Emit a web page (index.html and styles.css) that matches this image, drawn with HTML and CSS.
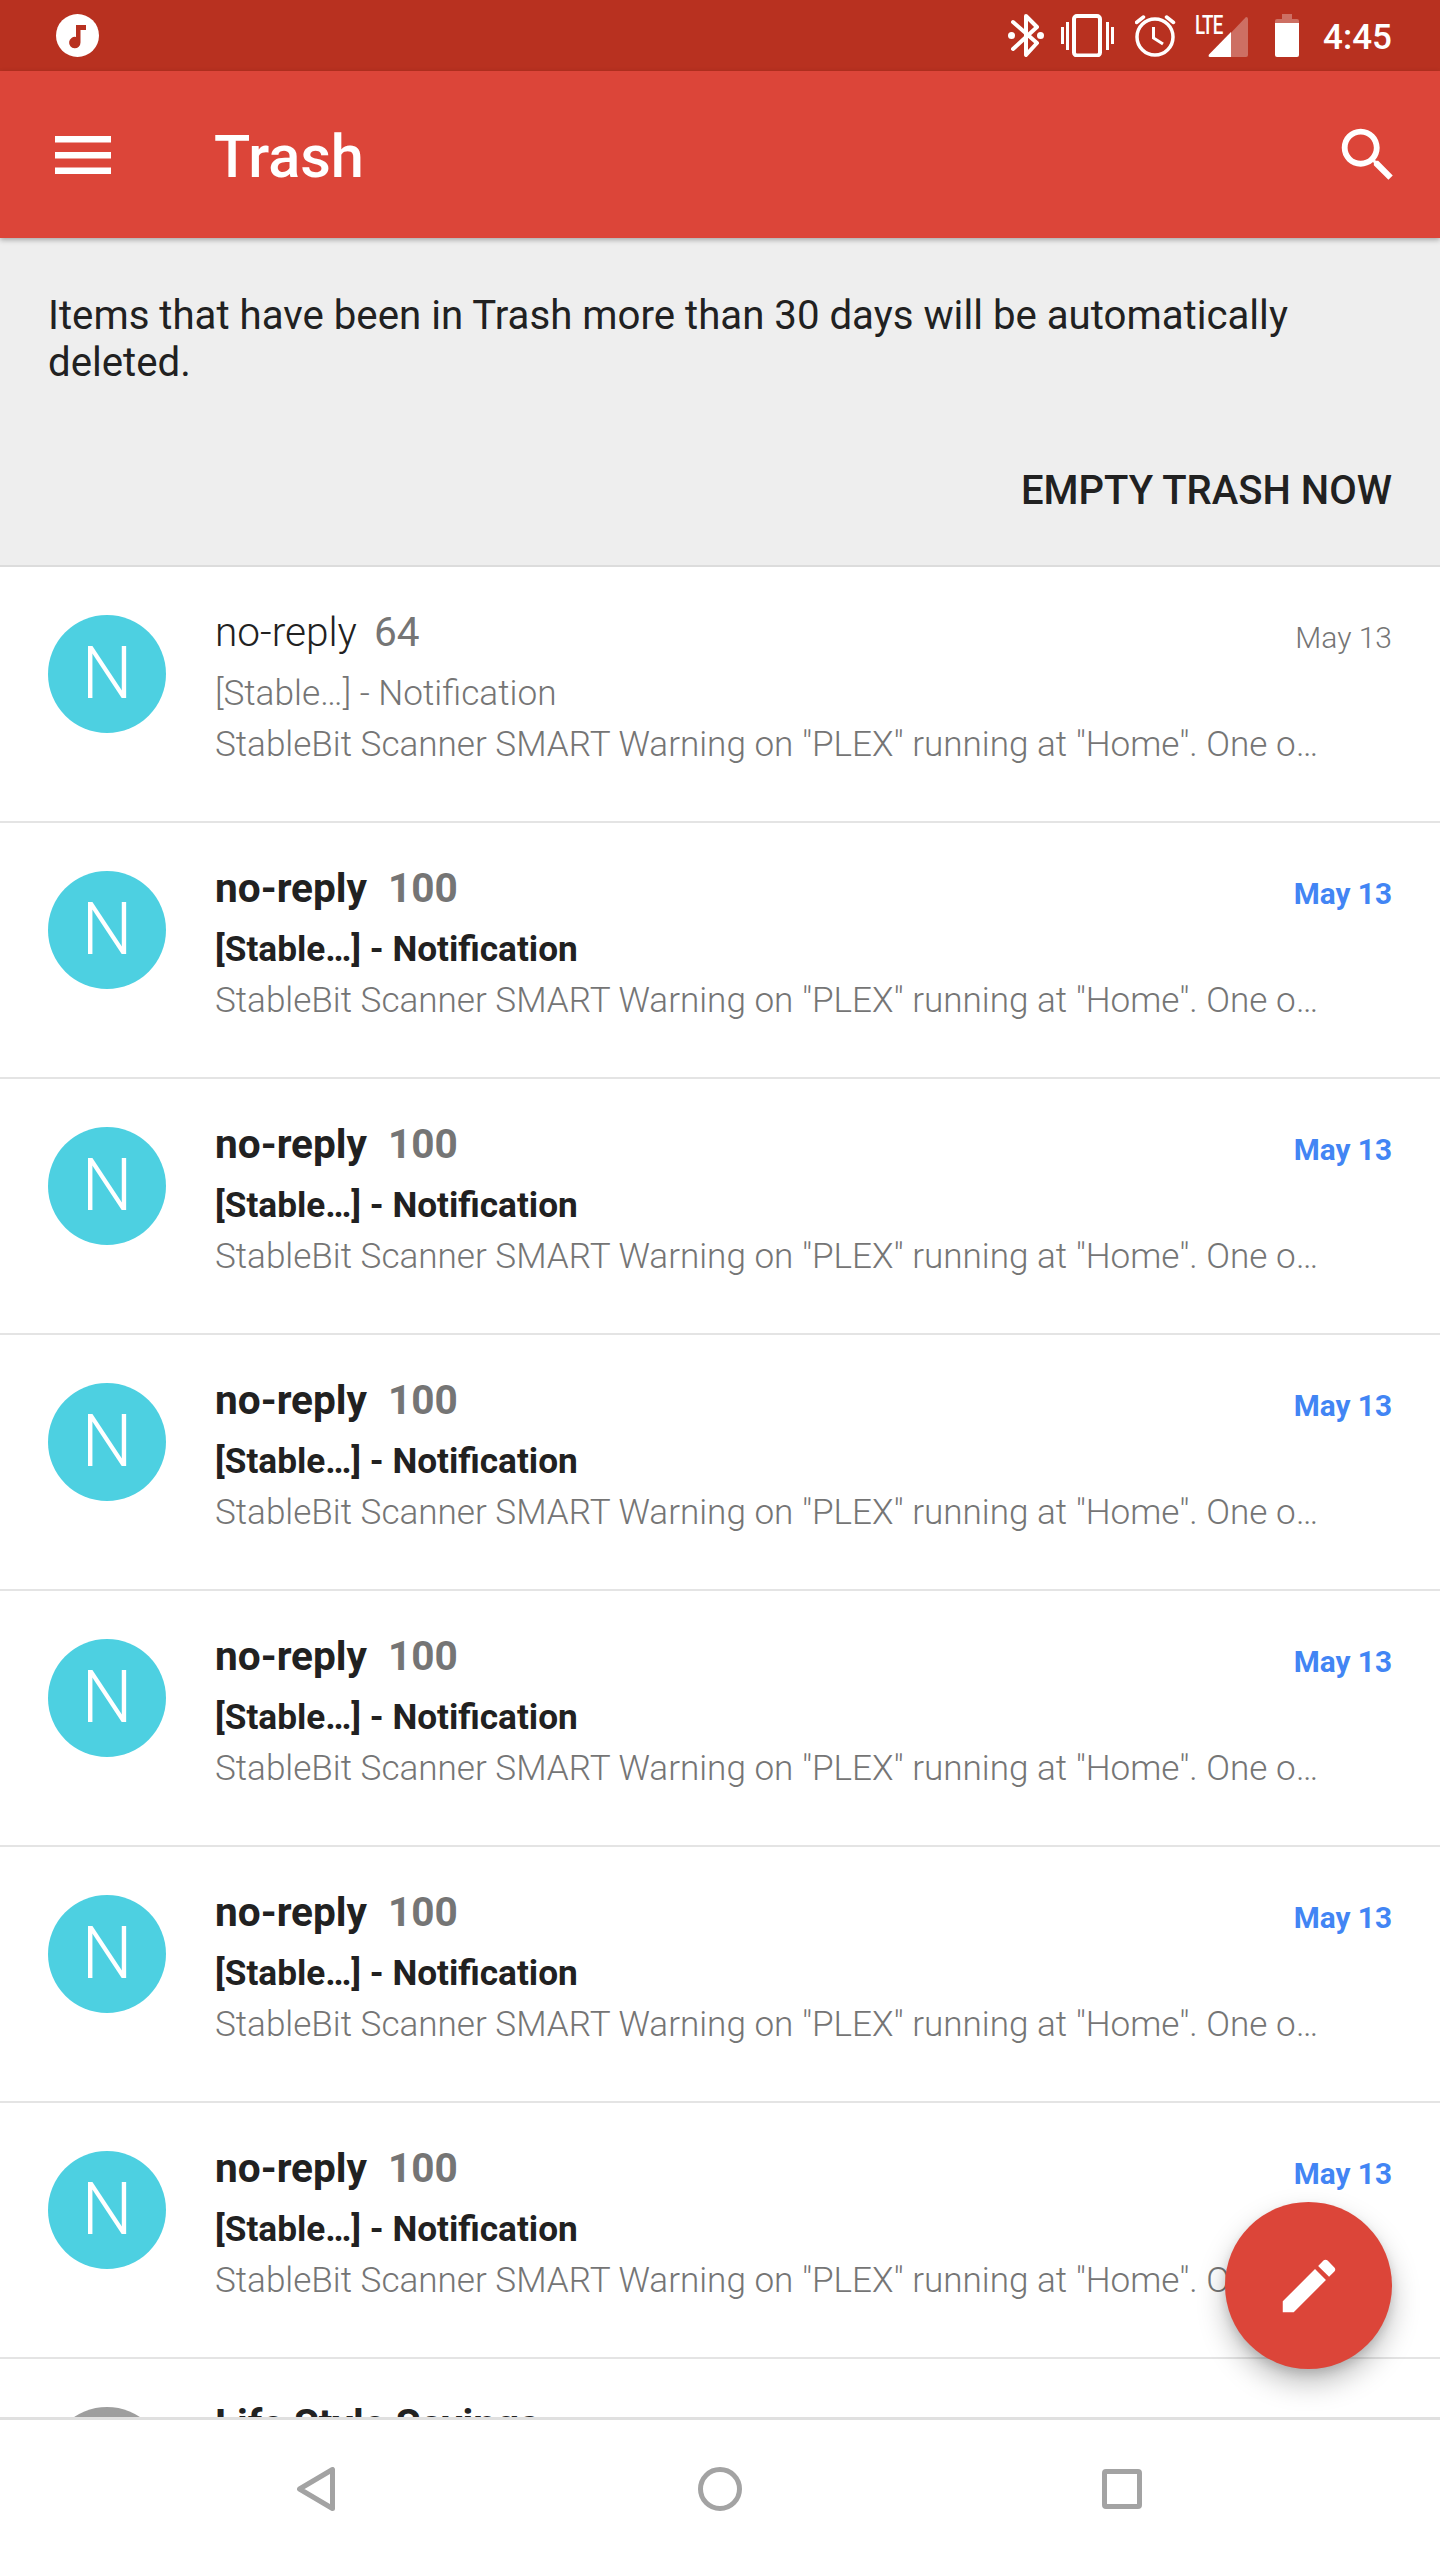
FILE: index.html
```html
<!DOCTYPE html>
<html lang="en">
<head>
<meta charset="utf-8">
<title>Trash</title>
<link rel="stylesheet" href="styles.css">
</head>
<body>
<div class="screen">
  <div class="status">
    <svg class="music" viewBox="0 0 43 43"><circle cx="21.500" cy="21.500" r="21.500" fill="#fff"/><path d="M20 11h10v5h-5.500v12.500a5.700 5.700 0 1 1-4.500-5.500z" fill="#b83120"/></svg>
    <div class="status-right">
      <svg class="si-bt" viewBox="0 0 36 43"><path d="M5 8 L29 29 L18 41 V2 L29 13 L5 35" fill="none" stroke="#fff" stroke-width="4" stroke-linejoin="round" stroke-linecap="round"/><circle cx="3.500" cy="21.500" r="3.500" fill="#fff"/><circle cx="32.500" cy="21.500" r="3.500" fill="#fff"/></svg>
      <svg class="si-vib" viewBox="0 0 53 43"><rect x="13" y="2" width="26" height="39.500" rx="3" fill="none" stroke="#fff" stroke-width="4"/><path d="M1.500 13v17M6.500 8v28M46.500 8v28M51.500 13v17" stroke="#fff" stroke-width="3" fill="none"/></svg>
      <svg class="si-alarm" viewBox="0 0 41 43"><circle cx="20" cy="23" r="18" fill="none" stroke="#fff" stroke-width="3.500"/><path d="M18.500 13v11l9.500 6" fill="none" stroke="#fff" stroke-width="3"/><path d="M1.500 8.500 8.500 3M38.500 8.500 31.500 3" stroke="#fff" stroke-width="3.500" stroke-linecap="round"/></svg>
      <div class="signal">
        <span class="lte">LTE</span>
        <svg class="si-sig" viewBox="0 0 40 40"><path d="M38 0a2 2 0 0 1 2 2v36a2 2 0 0 1-2 2H0z" fill="#fff" opacity=".3"/><path d="M23 15V40H2a1.500 1.500 0 0 1-1-2.500z" fill="#fff"/></svg>
      </div>
      <svg class="si-bat" viewBox="0 0 24 43"><path d="M7 0h10v5h5a2 2 0 0 1 2 2v3H0V7a2 2 0 0 1 2-2h5z" fill="#fff" opacity=".3"/><path d="M0 9h24v32a2 2 0 0 1-2 2H2a2 2 0 0 1-2-2z" fill="#fff"/></svg>
      <span class="clock">4:45</span>
    </div>
  </div>
  <header class="appbar">
    <svg class="menu" viewBox="0 0 56 38"><path d="M0 0h56v6.500H0zM0 16h56v6.500H0zM0 31.500h56V38H0z" fill="#fff"/></svg>
    <h1 class="title">Trash</h1>
    <svg class="search" viewBox="0 0 24 24"><path fill="#fff" d="M15.500 14h-.79l-.28-.27C15.410 12.590 16 11.110 16 9.500 16 5.910 13.090 3 9.500 3S3 5.910 3 9.500 5.910 16 9.500 16c1.610 0 3.090-.59 4.230-1.570l.27.28v.79l5 4.990L20.490 19l-4.990-5zm-6 0C7.010 14 5 11.990 5 9.500S7.010 5 9.500 5 14 7.010 14 9.500 11.990 14 9.500 14z"/></svg>
  </header>
  <section class="banner">
    <p class="banner-text">Items that have been in Trash more than 30 days will be automatically deleted.</p>
    <div class="banner-action">EMPTY TRASH NOW</div>
  </section>
  <main class="list">
    <article class="row">
      <div class="avatar">N</div>
      <div class="body">
        <div class="line-top"><span class="name">no-reply</span><span class="count">64</span><span class="date">May 13</span></div>
        <div class="subject">[Stable…] - Notification</div>
        <div class="snippet">StableBit Scanner SMART Warning on "PLEX" running at "Home". One o…</div>
      </div>
    </article>
    <article class="row unread">
      <div class="avatar">N</div>
      <div class="body">
        <div class="line-top"><span class="name">no-reply</span><span class="count">100</span><span class="date">May 13</span></div>
        <div class="subject">[Stable…] - Notification</div>
        <div class="snippet">StableBit Scanner SMART Warning on "PLEX" running at "Home". One o…</div>
      </div>
    </article>
    <article class="row unread">
      <div class="avatar">N</div>
      <div class="body">
        <div class="line-top"><span class="name">no-reply</span><span class="count">100</span><span class="date">May 13</span></div>
        <div class="subject">[Stable…] - Notification</div>
        <div class="snippet">StableBit Scanner SMART Warning on "PLEX" running at "Home". One o…</div>
      </div>
    </article>
    <article class="row unread">
      <div class="avatar">N</div>
      <div class="body">
        <div class="line-top"><span class="name">no-reply</span><span class="count">100</span><span class="date">May 13</span></div>
        <div class="subject">[Stable…] - Notification</div>
        <div class="snippet">StableBit Scanner SMART Warning on "PLEX" running at "Home". One o…</div>
      </div>
    </article>
    <article class="row unread">
      <div class="avatar">N</div>
      <div class="body">
        <div class="line-top"><span class="name">no-reply</span><span class="count">100</span><span class="date">May 13</span></div>
        <div class="subject">[Stable…] - Notification</div>
        <div class="snippet">StableBit Scanner SMART Warning on "PLEX" running at "Home". One o…</div>
      </div>
    </article>
    <article class="row unread">
      <div class="avatar">N</div>
      <div class="body">
        <div class="line-top"><span class="name">no-reply</span><span class="count">100</span><span class="date">May 13</span></div>
        <div class="subject">[Stable…] - Notification</div>
        <div class="snippet">StableBit Scanner SMART Warning on "PLEX" running at "Home". One o…</div>
      </div>
    </article>
    <article class="row unread">
      <div class="avatar">N</div>
      <div class="body">
        <div class="line-top"><span class="name">no-reply</span><span class="count">100</span><span class="date">May 13</span></div>
        <div class="subject">[Stable…] - Notification</div>
        <div class="snippet">StableBit Scanner SMART Warning on "PLEX" running at "Home". One o…</div>
      </div>
    </article>
    <article class="row unread">
      <div class="avatar grey">L</div>
      <div class="body">
        <div class="line-top"><span class="name">Life Style Savings</span></div>
      </div>
    </article>
  </main>
  <nav class="navbar">
    <svg class="nav-back" viewBox="0 0 38 44"><path d="M35.500 2.500V41.500L2.500 22z" fill="none" stroke="#a3a3a3" stroke-width="5" stroke-linejoin="round"/></svg>
    <svg class="nav-home" viewBox="0 0 44 44"><circle cx="22" cy="22" r="19.500" fill="none" stroke="#a3a3a3" stroke-width="5"/></svg>
    <svg class="nav-recent" viewBox="0 0 40 40"><rect x="2.500" y="2.500" width="35" height="35" rx="1.500" fill="none" stroke="#a3a3a3" stroke-width="5"/></svg>
  </nav>
  <button class="fab" type="button" aria-label="Compose">
    <svg class="fab-icon" viewBox="0 0 24 24"><path fill="#fff" d="M3 17.250V21h3.750L17.810 9.940l-3.750-3.750L3 17.250zM20.710 7.040c.39-.39.39-1.020 0-1.410l-2.340-2.340c-.39-.39-1.020-.39-1.410 0l-1.830 1.830 3.750 3.750 1.830-1.830z"/></svg>
  </button>
</div>
</body>
</html>
```
FILE: styles.css
```css
* { box-sizing: border-box; }
html, body { margin: 0; padding: 0; background: #fff; }
.screen {
  position: relative;
  width: 1440px;
  height: 2560px;
  display: flex;
  flex-direction: column;
  overflow: hidden;
  font-family: Roboto, "Liberation Sans", sans-serif;
  color: #212121;
}
.status {
  flex: 0 0 71px;
  background: #b83120;
  display: flex;
  align-items: flex-start;
  justify-content: space-between;
  padding: 14px 48px 0 56px;
}
.music { width: 43px; height: 43px; }
.status-right { display: flex; align-items: flex-start; }
.si-bt { width: 36px; height: 43px; }
.si-vib { width: 53px; height: 43px; margin-left: 17px; }
.si-alarm { width: 41px; height: 43px; margin-left: 21px; }
.signal { position: relative; width: 53px; height: 43px; margin-left: 19px; }
.lte {
  position: absolute;
  left: 0;
  top: -2px;
  font-size: 26px;
  line-height: 26px;
  font-weight: 500;
  letter-spacing: -1px;
  color: #fff;
  transform: scaleX(.72);
  transform-origin: left;
}
.si-sig { position: absolute; left: 13px; top: 3px; width: 40px; height: 40px; }
.si-bat { width: 24px; height: 43px; margin-left: 27px; }
.clock {
  margin-left: 24px;
  margin-top: 2px;
  color: #fff;
  font-size: 35px;
  font-weight: 500;
  line-height: 43px;
}
.appbar {
  flex: 0 0 167px;
  background: #dc4539;
  display: flex;
  align-items: center;
  padding: 0 37px 0 55px;
  position: relative;
  z-index: 2;
  box-shadow: 0 2px 5px rgba(0,0,0,.3);
}
.menu { width: 56px; height: 38px; }
.title {
  margin: 5px 0 0 103px;
  flex: 1;
  color: #fff;
  font-size: 59.500px;
  font-weight: 500;
  line-height: 70px;
}
.search { width: 70px; height: 70px; }
.banner {
  flex: 0 0 329px;
  background: #eee;
  border-bottom: 2px solid #dcdcdc;
  padding: 54px 48px 0;
}
.banner-text {
  margin: 0;
  font-size: 40.200px;
  line-height: 47px;
  color: #212121;
}
.banner-action {
  margin-top: 82px;
  text-align: right;
  font-size: 40px;
  line-height: 46px;
  font-weight: 500;
  color: #212121;
}
.list { flex: 1; min-height: 0; overflow: hidden; }
.row {
  height: 256px;
  display: flex;
  align-items: flex-start;
  padding: 48px 48px 0;
  border-bottom: 2px solid #e4e4e4;
}
.avatar {
  flex: 0 0 118px;
  height: 118px;
  border-radius: 50%;
  background: #4dd0e1;
  color: #fff;
  font-size: 72px;
  font-weight: 300;
  line-height: 118px;
  text-align: center;
}
.avatar.grey { background: #9e9e9e; }
.body { flex: 1; min-width: 0; margin-left: 49px; }
.line-top { display: flex; align-items: baseline; height: 60px; margin-top: -13px; }
.name { font-size: 40.600px; line-height: 60px; font-weight: 300; color: #212121; }
.count { margin-left: 17px; font-size: 40.600px; line-height: 60px; font-weight: 400; color: #757575; }
.date { align-self: flex-start; margin: 16px 0 0 auto; font-size: 30px; line-height: 40px; font-weight: 300; color: #757575; }
.subject { margin-top: 7px; font-size: 35.200px; line-height: 49px; font-weight: 300; color: #757575; }
.snippet { font-size: 35.100px; line-height: 52px; font-weight: 300; color: #757575; white-space: nowrap; }
.unread .name { font-weight: 700; }
.unread .count { margin-left: 21px; font-weight: 700; }
.unread .date { font-size: 29.750px; font-weight: 700; color: #4285f4; }
.unread .subject { font-weight: 700; color: #212121; }
.navbar {
  flex: 0 0 143px;
  background: #fff;
  border-top: 3px solid #e0e0e0;
  position: relative;
  z-index: 2;
  display: flex;
  align-items: center;
  padding: 0 298px 2px 297px;
  justify-content: space-between;
}
.nav-back { width: 38px; height: 44px; }
.nav-home { width: 44px; height: 44px; margin-left: 3px; }
.nav-recent { width: 40px; height: 40px; }
.fab {
  position: absolute;
  left: 1225px;
  top: 2202px;
  width: 167px;
  height: 167px;
  padding: 0;
  border: 0;
  border-radius: 50%;
  background: #dc4539;
  box-shadow: 0 14px 28px rgba(0,0,0,.25), 0 5px 10px rgba(0,0,0,.12);
  z-index: 3;
  display: flex;
  align-items: center;
  justify-content: center;
}
.fab-icon { width: 70px; height: 70px; }
```
